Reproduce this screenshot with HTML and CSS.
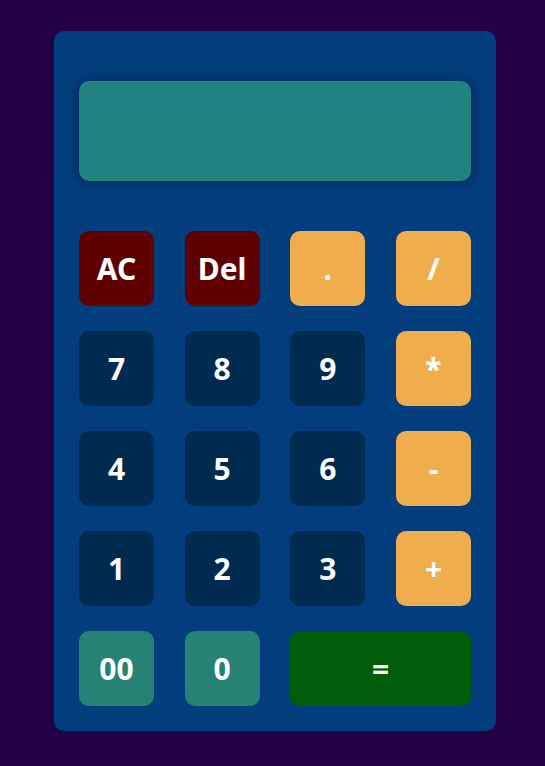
FILE: index.html
```html
<!DOCTYPE html>
<html>
<head>
<meta charset="utf-8">
<link rel="stylesheet" href="styles.css">
</head>
<body>
<div class="calc">
  <div class="display"></div>
  <div class="keys">
    <button class="key red">AC</button>
    <button class="key red">Del</button>
    <button class="key op">.</button>
    <button class="key op">/</button>
    <button class="key num">7</button>
    <button class="key num">8</button>
    <button class="key num">9</button>
    <button class="key op">*</button>
    <button class="key num">4</button>
    <button class="key num">5</button>
    <button class="key num">6</button>
    <button class="key op">-</button>
    <button class="key num">1</button>
    <button class="key num">2</button>
    <button class="key num">3</button>
    <button class="key op">+</button>
    <button class="key teal">00</button>
    <button class="key teal">0</button>
    <button class="key eq">=</button>
  </div>
</div>
</body>
</html>
```
FILE: styles.css
```css
html, body {
  margin: 0;
  padding: 0;
  background: #240046;
  height: 100%;
}
body {
  padding-top: 31px;
  box-sizing: border-box;
  font-family: "Noto Sans", "Lato", sans-serif;
}
.calc {
  width: 442px;
  margin-left: 54px;
  box-sizing: border-box;
  padding: 50px 25px 25px;
  background: #023e7d;
  border-radius: 10px;
}
.display {
  height: 100px;
  background: #218380;
  border-radius: 10px;
  box-shadow: 0 0 12px 2px rgba(0, 20, 60, 0.45);
  margin-bottom: 50px;
}
.keys {
  display: grid;
  grid-template-columns: repeat(4, 75px);
  grid-auto-rows: 75px;
  justify-content: space-between;
  row-gap: 25px;
}
.key {
  border: none;
  border-radius: 10px;
  color: #ffffff;
  font-family: "Noto Sans", "Lato", sans-serif;
  font-weight: 700;
  font-size: 30px;
  padding: 0;
  display: flex;
  align-items: center;
  justify-content: center;
}
.red { background: #5e0000; }
.op { background: #efae4b; }
.num { background: #002a4f; }
.teal { background: #258275; }
.eq {
  background: #005e08;
  grid-column: span 2;
}
```
